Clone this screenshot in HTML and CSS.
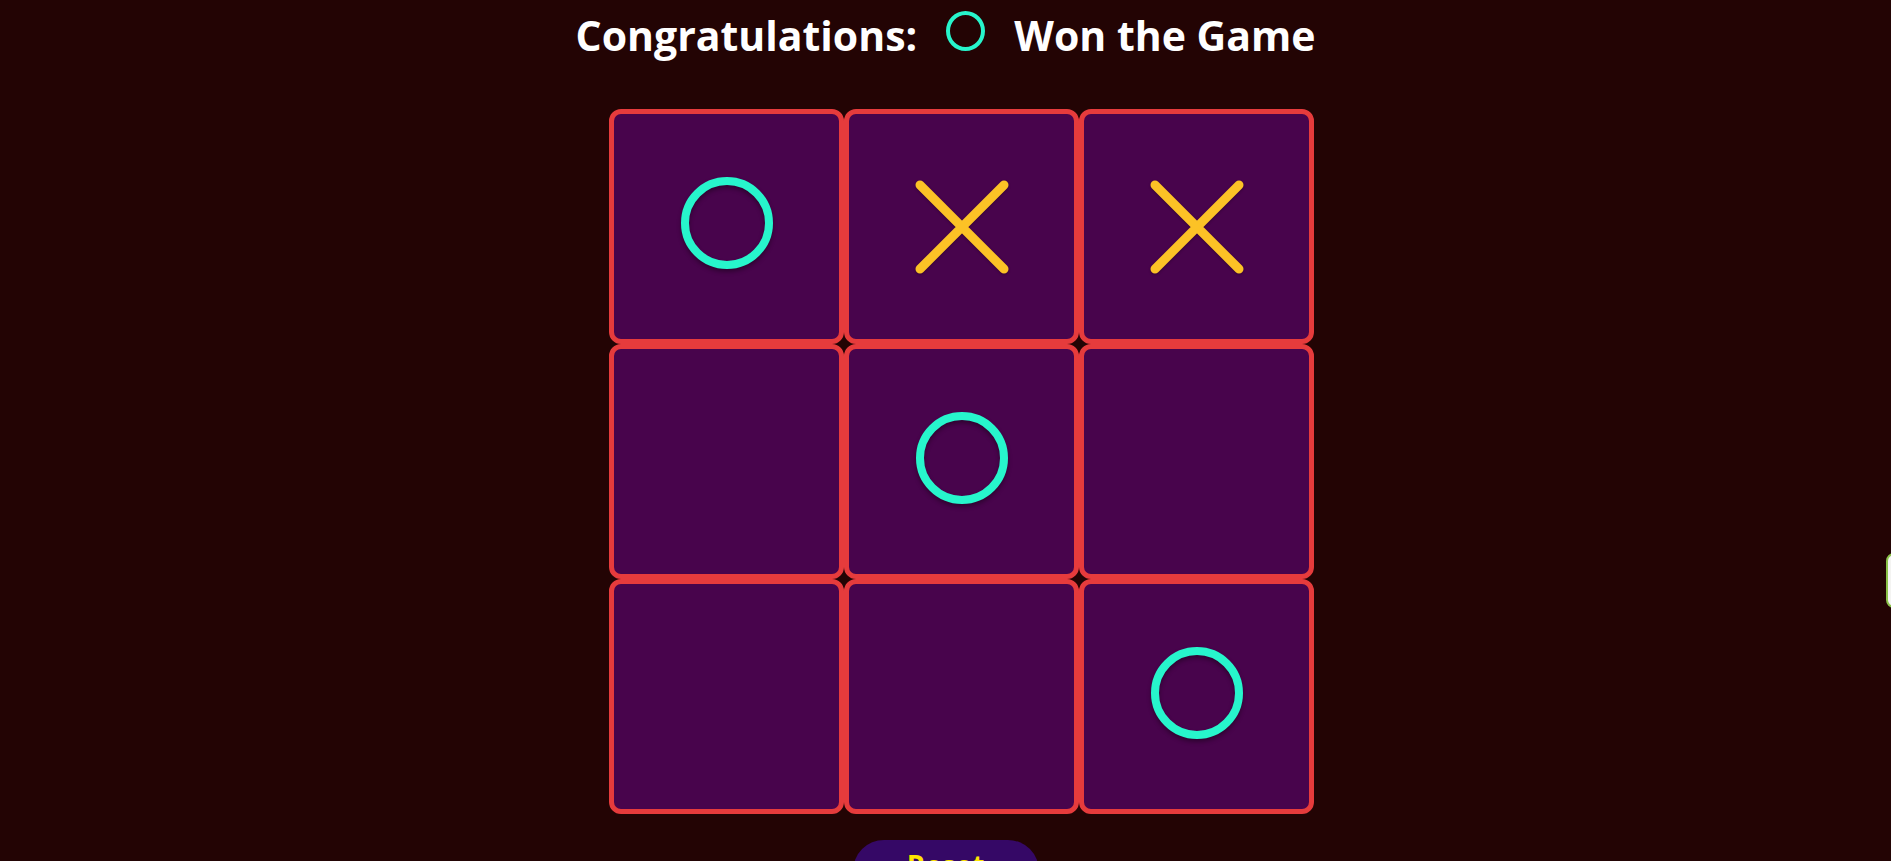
FILE: index.html
```html
<!DOCTYPE html>
<html lang="en">
<head>
<meta charset="utf-8">
<title>Tic Tac Toe</title>
<link rel="stylesheet" href="styles.css">
</head>
<body>
<main class="game">
  <h1 class="status">
    <span class="status-text">Congratulations:</span>
    <span class="mark-o mark-small"></span>
    <span class="status-text">Won the Game</span>
  </h1>
  <div class="board">
    <div class="cell"><span class="mark-o"></span></div>
    <div class="cell"><svg class="mark-x" viewBox="0 0 94 94"><path d="M5 5 L89 89 M89 5 L5 89"/></svg></div>
    <div class="cell"><svg class="mark-x" viewBox="0 0 94 94"><path d="M5 5 L89 89 M89 5 L5 89"/></svg></div>
    <div class="cell"></div>
    <div class="cell"><span class="mark-o"></span></div>
    <div class="cell"></div>
    <div class="cell"></div>
    <div class="cell"></div>
    <div class="cell"><span class="mark-o"></span></div>
  </div>
  <button class="reset">Reset</button>
</main>
<div class="side-tab"></div>
</body>
</html>
```

FILE: styles.css
```css
html {
  overflow: hidden;
}
body {
  margin: 0;
  background: #230404;
  font-family: "Open Sans", "Noto Sans", sans-serif;
  color: #ffffff;
}
.game {
  display: flex;
  flex-direction: column;
  align-items: center;
  padding-top: 11px;
}
.status {
  display: flex;
  align-items: center;
  gap: 29px;
  margin: 0;
  height: 40px;
  font-size: 41px;
  font-weight: 700;
  line-height: 40px;
  letter-spacing: 0;
}
.status-text {
  position: relative;
  top: 4px;
}
.mark-o {
  display: block;
  box-sizing: border-box;
  width: 92px;
  height: 92px;
  border: 8px solid #27f5cc;
  border-radius: 50%;
  margin-bottom: 8px;
  filter: drop-shadow(0 3px 2px rgba(0, 0, 0, 0.35));
}
.mark-small {
  width: 39px;
  height: 40px;
  border-width: 4px;
  margin-bottom: 0;
  filter: none;
}
.board {
  display: grid;
  grid-template-columns: repeat(3, 235px);
  grid-template-rows: repeat(3, 235px);
  margin-top: 58px;
  margin-left: 32px;
}
.cell {
  box-sizing: border-box;
  display: flex;
  align-items: center;
  justify-content: center;
  background: #48044c;
  border: 5px solid #e63b3c;
  border-radius: 12px;
}
.mark-x {
  width: 94px;
  height: 94px;
  fill: none;
  stroke: #fcc226;
  stroke-width: 9;
  stroke-linecap: round;
  filter: drop-shadow(0 1px 1px rgba(0, 0, 0, 0.3));
}
.reset {
  display: block;
  margin-top: 26px;
  width: 186px;
  padding: 6px 0 18px;
  border: none;
  border-radius: 31px;
  background: #350866;
  color: #ffe500;
  font-family: "Open Sans", "Noto Sans", sans-serif;
  font-size: 28px;
  font-weight: 700;
  line-height: 38px;
}
.side-tab {
  position: fixed;
  top: 553px;
  left: 1886px;
  width: 40px;
  height: 55px;
  box-sizing: border-box;
  background: #f4f4f2;
  border: 2px solid #8bc34a;
  border-radius: 8px;
}
```
